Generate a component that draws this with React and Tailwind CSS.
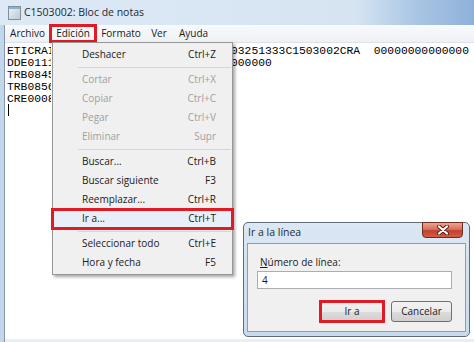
const lines = [
  { left: 'ETICRAI', right: '03251333C1503002CRA  00000000000000' },
  { left: 'DDE0111', right: '000000' },
  { left: 'TRB0845' },
  { left: 'TRB0856' },
  { left: 'CRE0008' },
];

const menuItems = [
  { label: 'Deshacer', key: 'Ctrl+Z' },
  { sep: true },
  { label: 'Cortar', key: 'Ctrl+X', off: true },
  { label: 'Copiar', key: 'Ctrl+C', off: true },
  { label: 'Pegar', key: 'Ctrl+V', off: true },
  { label: 'Eliminar', key: 'Supr', off: true },
  { sep: true },
  { label: 'Buscar...', key: 'Ctrl+B' },
  { label: 'Buscar siguiente', key: 'F3' },
  { label: 'Reemplazar...', key: 'Ctrl+R' },
  { label: 'Ir a...', key: 'Ctrl+T', hot: true },
  { sep: true },
  { label: 'Seleccionar todo', key: 'Ctrl+E' },
  { label: 'Hora y fecha', key: 'F5' },
];

function NotepadIcon() {
  return (
    <svg width="13" height="14" viewBox="0 0 13 14">
      <defs>
        <linearGradient id="np" x1="0" y1="0" x2="1" y2="1">
          <stop offset="0" stopColor="#eef4f8" />
          <stop offset="1" stopColor="#b7c9d6" />
        </linearGradient>
      </defs>
      <rect x="0.5" y="0.5" width="12" height="13" fill="url(#np)" stroke="#7f909e" />
      <rect x="1" y="1" width="11" height="2" fill="#8fb0c8" />
    </svg>
  );
}

function CloseX() {
  return (
    <svg width="12" height="10" viewBox="0 0 12 10">
      <path d="M2 1.5 L10 8.5 M10 1.5 L2 8.5" stroke="#5a1a12" strokeWidth="4" strokeLinecap="round" />
      <path d="M2 1.5 L10 8.5 M10 1.5 L2 8.5" stroke="#ffffff" strokeWidth="2.2" strokeLinecap="round" />
    </svg>
  );
}

export default function App() {
  return (
    <div className="relative w-[474px] h-[342px] overflow-hidden bg-white font-['Open_Sans',sans-serif] text-[10px] text-[#1a1a1a]">
      {/* Title bar */}
      <div className="flex h-[25px] items-center gap-[3px] pl-[8px] bg-[linear-gradient(90deg,#dde9f5_0%,#d6e4f2_75%,#a9c5e4_88%,#8fb1d9_100%)]">
        <NotepadIcon />
        <span className="text-[10.5px] leading-none text-[#1e2a36]">C1503002: Bloc de notas</span>
      </div>

      <div className="flex h-[317px]">
        {/* left frame */}
        <div className="w-[5px] bg-[#c2d6ec] border-r border-[#8796aa]" />

        <div className="flex flex-1 flex-col">
          {/* Menu bar */}
          <div className="flex h-[18px] items-center bg-[linear-gradient(180deg,#f8fafc,#eef1f5)] border-b border-[#dde2e8]">
            <span className="w-[45px] text-center">Archivo</span>
            <span className="relative w-[46px] text-center">
              Edición
              <span className="absolute left-[-1px] top-[-2px] w-[48px] h-[19px] border-[3px] border-[#e01b24]" />
            </span>
            <span className="w-[50px] text-center">Formato</span>
            <span className="w-[26px] text-center">Ver</span>
            <span className="w-[43px] text-center">Ayuda</span>
          </div>

          {/* Text area */}
          <div className="relative flex-1 bg-white pl-[2px] pt-[2px] font-['Liberation_Mono',monospace] text-[11.33px] leading-[12px] text-black whitespace-pre">
            {lines.map((l, i) => (
              <div key={i} className="flex h-[12px]">
                <span className="w-[44px] overflow-hidden">{l.left}</span>
                {l.right && <span className="ml-[180px]">{l.right}</span>}
              </div>
            ))}
            <div className="ml-[1px] mt-[-1px] w-px h-[12px] bg-black" />
          </div>
          <div className="h-[3px] bg-[#e9eef4]" />
        </div>
      </div>

      {/* Dropdown menu */}
      <div className="absolute left-[52px] top-[42px] w-[181px] py-[2px] bg-[#f0f0f0] border border-[#979797] shadow-[2px_2px_3px_rgba(0,0,0,0.35)]">
        {menuItems.map((it, i) =>
          it.sep ? (
            <div key={i} className="flex h-[6px] items-center pl-[25px] pr-[1px]">
              <div className="h-px w-full bg-[#d6d6d6]" />
            </div>
          ) : (
            <div
              key={i}
              className={`relative flex h-[19px] items-center justify-between pl-[29px] pr-[16px] ${it.hot ? 'bg-[#e8eff8]' : ''} ${it.off ? 'text-[#a0a0a0]' : 'text-[#1a1a1a]'}`}
            >
              <span>{it.label}</span>
              <span>{it.key}</span>
              {it.hot && (
                <span className="absolute left-[-2px] right-[-2px] top-[-1px] bottom-[-2px] border-[3px] border-[#e01b24]" />
              )}
            </div>
          )
        )}
      </div>

      {/* Go to line dialog */}
      <div className="absolute left-[243px] top-[222px] flex w-[227px] h-[115px] flex-col rounded-[5px] border border-[#5d6b7b] bg-[linear-gradient(180deg,#dbe7f3,#c9dbee)]">
        <div className="relative flex h-[20px] items-center pl-[4px]">
          <span className="text-[10.5px] text-[#1e2a36]">Ir a la línea</span>
          <div className="absolute right-[6px] top-[-1px] flex w-[41px] h-[16px] items-center justify-center rounded-b-[4px] border border-[#6d2b22] bg-[linear-gradient(180deg,#eba494_0%,#d9705c_45%,#c2402c_55%,#d35c44_100%)]">
            <CloseX />
          </div>
        </div>
        <div className="mx-[3px] mb-[4px] flex flex-1 flex-col border border-[#8e9db0] bg-[#f0f0f0] pl-[9px] pr-[13px] pt-[11px]">
          <span className="ml-[3px] leading-[14px]">
            <span className="underline">N</span>úmero de línea:
          </span>
          <div className="mt-[2px] flex h-[18px] items-center border border-[#abadb3] bg-white pl-[4px]">4</div>
          <div className="mt-[12px] flex justify-end gap-[8px]">
            <div className="relative flex w-[62px] h-[21px] items-center justify-center rounded-[3px] border border-[#707070] bg-[linear-gradient(180deg,#f2f2f2_0%,#ebebeb_50%,#dddddd_51%,#cfcfcf_100%)]">
              Ir a
              <span className="absolute left-[-3px] right-[-3px] top-[-2px] bottom-[-2px] border-[3px] border-[#e01b24]" />
            </div>
            <div className="flex w-[61px] h-[21px] items-center justify-center rounded-[3px] border border-[#707070] bg-[linear-gradient(180deg,#f2f2f2_0%,#ebebeb_50%,#dddddd_51%,#cfcfcf_100%)]">
              Cancelar
            </div>
          </div>
        </div>
      </div>
    </div>
  );
}
